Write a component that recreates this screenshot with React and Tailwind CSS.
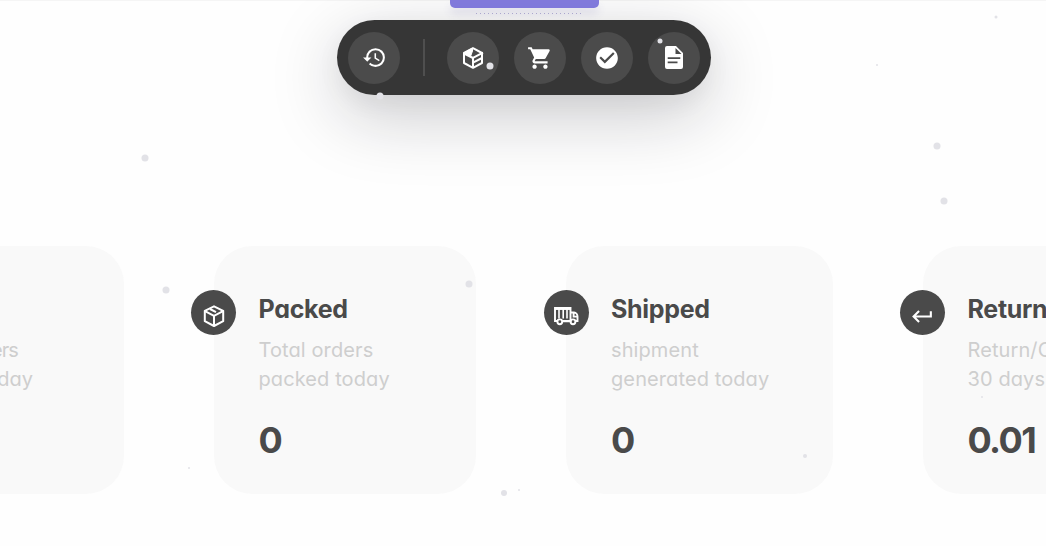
import { MdHistory, MdShoppingCart, MdCheckCircle, MdKeyboardReturn } from "react-icons/md";

const particles = [
  { x: 995.5, y: 16.5, size: 3 },
  { x: 877, y: 65, size: 2 },
  { x: 145, y: 158, size: 7 },
  { x: 936.5, y: 146, size: 7 },
  { x: 943.5, y: 200.5, size: 7 },
  { x: 165.5, y: 290, size: 7 },
  { x: 468.5, y: 283.5, size: 7 },
  { x: 379.5, y: 95.5, size: 7 },
  { x: 489.5, y: 66, size: 7 },
  { x: 660, y: 40.5, size: 5 },
  { x: 804.5, y: 456, size: 4 },
  { x: 503.5, y: 492.5, size: 6 },
  { x: 519, y: 489.5, size: 2 },
  { x: 189, y: 468, size: 2 },
  { x: 982, y: 397, size: 2 },
];

function OpenBoxIcon() {
  return (
    <svg viewBox="0 0 24 24" className="size-6" fill="none" stroke="currentColor" strokeWidth="2" strokeLinejoin="round">
      <path d="M12 2.2 21 7v10l-9 4.8L3 17V7z" />
      <path d="M2.5 7.2 11.5 2v3L9.5 10.5z" fill="currentColor" strokeWidth="1" />
      <path d="M3 7.5l9 4.5v9.8M11.5 12.2 22 6.6M12.5 16.4 21 12" />
    </svg>
  );
}

function DocumentIcon() {
  return (
    <svg viewBox="0 0 18 23" className="h-[23px] w-[18px]">
      <path
        fill="currentColor"
        fillRule="evenodd"
        d="M2 0h9l7 7v14a2 2 0 0 1-2 2H2a2 2 0 0 1-2-2V2a2 2 0 0 1 2-2zM10.5 2v6H16.5zM2.7 11.2v1.8h12.6v-1.8zM2.7 15.5v1.8h9.8v-1.8z"
      />
    </svg>
  );
}

function PackageIcon() {
  return (
    <svg viewBox="0 0 24 24" className="size-6" fill="none" stroke="currentColor" strokeWidth="2" strokeLinejoin="round">
      <path d="M12 2.3 21.2 6.8v10.4L12 22l-9.2-4.8V6.8z" />
      <path d="M3 7.2l9 4.6 9-4.6M12 11.5V22M8 5l6 3.2" />
    </svg>
  );
}

function TruckIcon() {
  return (
    <svg viewBox="0 0 26 20" className="h-5 w-[26px]" fill="none" stroke="currentColor" strokeWidth="1.9">
      <path d="M4 15H2V2h15.5v13H9.5" />
      <path d="M6 3v9.5M10.2 3v9.5M14 3v9.5" strokeWidth="1.6" />
      <path d="M2 3h15" />
      <path d="M17.5 6.5h3.6c2 0 3.4 2 3.4 4V15h-1.8M20.6 7v3.6h4M9.5 15.2H17" />
      <circle cx="6.8" cy="15.8" r="2.4" />
      <circle cx="20" cy="15.8" r="2.4" />
    </svg>
  );
}

function ToolButton({ children }) {
  return (
    <button className="flex size-[52px] shrink-0 items-center justify-center rounded-full bg-[#4b4b4b] text-white">
      {children}
    </button>
  );
}

function StatCard({ className, icon, title, lines, value }) {
  return (
    <div className={`relative h-[248px] shrink-0 rounded-[38px] bg-[#f9f9f9] pt-[45px] pl-[45px] ${className}`}>
      <div className="absolute top-11 -left-[22.5px] flex size-[45px] items-center justify-center rounded-full bg-[#4a4a4a] pt-[7px] text-white">
        {icon}
      </div>
      <h2 className="text-[25px] leading-9 font-bold tracking-[-0.3px] whitespace-nowrap text-[#4a4a4a]">{title}</h2>
      <p className="mt-[9px] text-[20px] leading-[29px] tracking-[0.1px] whitespace-nowrap text-[#cecece]">
        {lines[0]}
        <br />
        {lines[1]}
      </p>
      <p className="mt-6 text-[36px] leading-[44px] font-bold tracking-[-1.6px] text-[#4a4a4a]">{value}</p>
    </div>
  );
}

function App() {
  return (
    <div className="relative flex h-[546px] w-[1046px] flex-col overflow-hidden bg-[#fefefe] font-['Inter',sans-serif] shadow-[inset_0_1px_0_#f5f5f5] [font-feature-settings:'cv11']">
      <div className="flex h-[20px] shrink-0 flex-col items-center">
        <div className="ml-[2px] h-2 w-[149px] shrink-0 rounded-b-[5px] bg-[#857de2] shadow-[0_6px_8px_rgba(80,70,160,0.12)]" />
        <div className="mt-[5px] ml-[12px] h-px w-[107px] bg-[repeating-linear-gradient(90deg,#b4b0d8_0_1px,transparent_1px_4px)]" />
      </div>

      <div className="ml-[337px] flex h-[75px] w-[374px] shrink-0 items-center rounded-full bg-[#363636] pl-[11px] shadow-[0_20px_70px_rgba(20,20,30,0.22),0_8px_24px_rgba(0,0,0,0.05)]">
        <ToolButton>
          <MdHistory size={25} />
        </ToolButton>
        <div className="mr-[22px] ml-[23px] h-[37px] w-[2px] bg-[#4f4f4f]" />
        <div className="flex gap-[15px]">
          <ToolButton>
            <OpenBoxIcon />
          </ToolButton>
          <ToolButton>
            <MdShoppingCart size={26} />
          </ToolButton>
          <ToolButton>
            <MdCheckCircle size={26} />
          </ToolButton>
          <ToolButton>
            <DocumentIcon />
          </ToolButton>
        </div>
      </div>

      <div className="mt-[151px] flex">
        <div className="flex h-[248px] w-[124px] shrink-0 flex-col items-start rounded-r-[38px] bg-[#f9f9f9] pt-[90px] text-[20px] leading-[29px] text-[#cecece]">
          <p className="flex w-[18px] justify-end tracking-[-0.9px]">orders</p>
          <p className="flex w-[33px] justify-end">today</p>
        </div>
        <StatCard
          className="ml-[89.5px] w-[262.5px]"
          icon={<PackageIcon />}
          title="Packed"
          lines={["Total orders", "packed today"]}
          value="0"
        />
        <StatCard
          className="ml-[90px] w-[267px]"
          icon={<TruckIcon />}
          title="Shipped"
          lines={["shipment", "generated today"]}
          value="0"
        />
        <StatCard
          className="ml-[89.5px] w-[264px]"
          icon={<MdKeyboardReturn size={25} />}
          title="Return"
          lines={["Return/C", "30 days"]}
          value="0.01"
        />
      </div>

      {/* floating background particles */}
      {particles.map((p) => (
        <span
          key={`${p.x}-${p.y}`}
          className="absolute -translate-x-1/2 -translate-y-1/2 rounded-full bg-[#e2e2e7]"
          style={{ left: p.x, top: p.y, width: p.size, height: p.size }}
        />
      ))}
    </div>
  );
}

export default App;
